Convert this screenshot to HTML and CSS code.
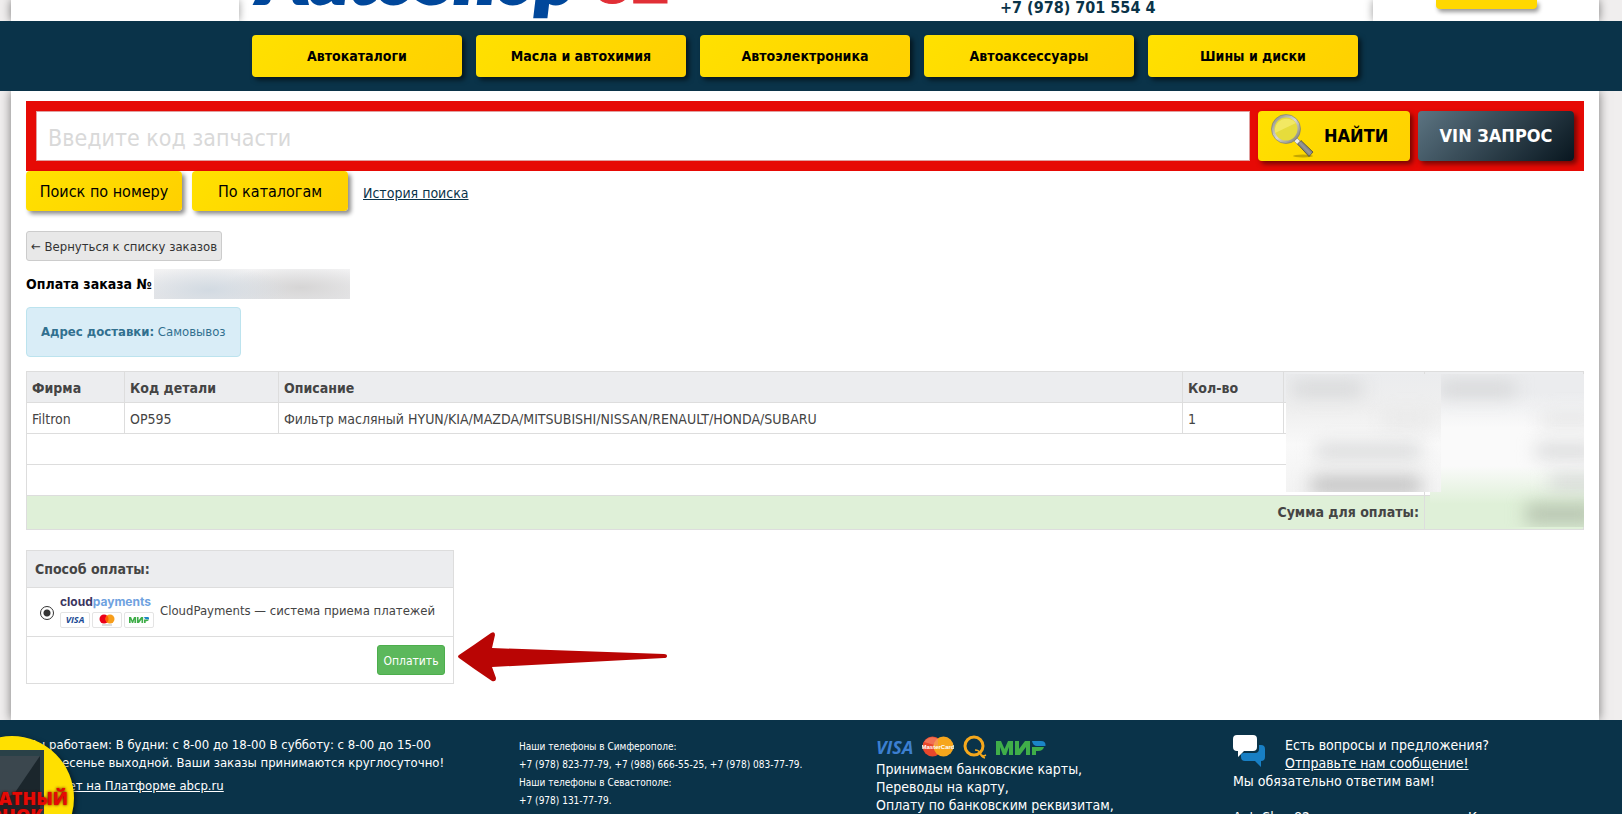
FILE: index.html
```html
<!DOCTYPE html>
<html lang="ru">
<head>
<meta charset="utf-8">
<title>Оплата заказа — AutoShop 82</title>
<link rel="stylesheet" href="styles.css">
</head>
<body>
<div class="page">
  <header class="header">
    <div class="header-side header-left"></div>
    <div class="header-main">
      <div class="logo"><span class="logo-name">AutoShop</span> <span class="logo-num">82</span></div>
      <div class="phone">+7 (978) 701 554 4</div>
    </div>
    <div class="header-side header-right"><div class="header-btn"></div></div>
  </header>
</div>
<nav class="nav">
  <a class="nav-btn" href="#">Автокаталоги</a>
  <a class="nav-btn" href="#">Масла и автохимия</a>
  <a class="nav-btn" href="#">Автоэлектроника</a>
  <a class="nav-btn" href="#">Автоаксессуары</a>
  <a class="nav-btn" href="#">Шины и диски</a>
</nav>
<div class="page page-main">
  <main class="content">
    <form class="search">
      <input class="search-input" type="text" placeholder="Введите код запчасти" aria-label="Код запчасти">
      <button class="search-btn" type="button">
        <svg class="lens" viewBox="0 0 44 44" width="44" height="44" aria-hidden="true">
          <defs>
            <linearGradient id="ring" x1="0" y1="0" x2="1" y2="1"><stop offset="0" stop-color="#8c8c84"/><stop offset=".5" stop-color="#d8d8d0"/><stop offset="1" stop-color="#77776f"/></linearGradient>
            <linearGradient id="grip" x1="0" y1="1" x2="1" y2="0"><stop offset="0" stop-color="#222"/><stop offset=".5" stop-color="#999"/><stop offset="1" stop-color="#333"/></linearGradient>
          </defs>
          <ellipse cx="33" cy="42" rx="10" ry="1.5" fill="#8a7400" opacity=".5"/>
          <path d="M24 27l3-3 5 5-3 3z" fill="#eee" stroke="#888" stroke-width=".6"/>
          <path d="M27.500 30l3.500-3.500 12 11.500-4 4.500z" fill="url(#grip)" stroke="#333" stroke-width=".6"/>
          <circle cx="16" cy="15" r="13" fill="#e6dc3c" stroke="url(#ring)" stroke-width="3"/>
          <path d="M5 19A12 12 0 0 1 26 9z" fill="#f6ec74" opacity=".7"/>
          <circle cx="16" cy="15" r="14.500" fill="none" stroke="#77776c" stroke-width=".6"/>
        </svg>
        <span>НАЙТИ</span>
      </button>
      <button class="vin-btn" type="button">VIN ЗАПРОС</button>
    </form>
    <div class="tabs">
      <button class="tab" type="button">Поиск по номеру</button>
      <button class="tab" type="button">По каталогам</button>
      <a class="history" href="#">История поиска</a>
    </div>
    <button class="back" type="button">← Вернуться к списку заказов</button>
    <h1 class="title">Оплата заказа № <span class="masked-number"></span></h1>
    <div class="alert"><strong>Адрес доставки:</strong> Самовывоз</div>
    <div class="order">
      <table class="order-table">
        <colgroup><col class="c-brand"><col class="c-code"><col><col class="c-qty"><col class="c-price"><col class="c-sum"></colgroup>
        <thead><tr><th>Фирма</th><th>Код детали</th><th>Описание</th><th>Кол-во</th><th></th><th></th></tr></thead>
        <tbody>
          <tr><td>Filtron</td><td>OP595</td><td>Фильтр масляный HYUN/KIA/MAZDA/MITSUBISHI/NISSAN/RENAULT/HONDA/SUBARU</td><td>1</td><td></td><td></td></tr>
          <tr><td colspan="5"></td><td></td></tr>
          <tr><td colspan="5"></td><td></td></tr>
          <tr class="total"><td colspan="5">Сумма для оплаты:</td><td></td></tr>
        </tbody>
      </table>
      <div class="mask mask-sum"><i class="smudge s-head"></i><i class="smudge s-one"></i><i class="smudge s-two"></i><i class="smudge s-three"></i><i class="smudge s-total"></i></div>
      <div class="mask mask-price"><i class="smudge p-head"></i><i class="smudge p-one"></i><i class="smudge p-two"></i><i class="smudge p-three"></i></div>
    </div>
    <div class="pay-row">
      <form class="pay">
        <div class="pay-head">Способ оплаты:</div>
        <div class="pay-option">
          <input class="radio" type="radio" id="cloud" name="pay" checked>
          <label class="pay-label" for="cloud">
            <span class="cloud">
              <span class="cloud-name">cloud<span>payments</span></span>
              <span class="cards">
                <span class="card visa">VISA</span>
                <span class="card"><svg viewBox="0 0 16 12" width="16" height="12" aria-hidden="true"><circle cx="5" cy="5" r="4.500" fill="#eb001b"/><circle cx="11" cy="5" r="4.500" fill="#f79e1b"/><path d="M8 1.600a4.500 4.500 0 0 1 0 6.800 4.500 4.500 0 0 1 0-6.800z" fill="#ff5f00"/><path d="M3 11h10" stroke="#bbb" stroke-width="1"/></svg></span>
                <span class="card"><svg viewBox="0 0 48 18" width="20" height="8" aria-hidden="true"><use href="#mir"/></svg></span>
              </span>
            </span>
            <span>CloudPayments — система приема платежей</span>
          </label>
        </div>
        <div class="pay-foot"><button class="pay-btn" type="button">Оплатить</button></div>
      </form>
      <svg class="arrow" viewBox="0 0 209 50" width="209" height="50" aria-hidden="true"><path d="M1 23Q16 13 33 1q4-2 4 2l-3 13 172 6q3 0 3 2t-3 2L34 35l4 11q0 4-4 3Q16 37 1 26q-2-1.500 0-3z" fill="#b90504"/></svg>
    </div>
  </main>
</div>
<footer class="footer">
  <div class="footer-cols">
    <div class="f-hours">
      <p>Мы работаем: В будни: с 8-00 до 18-00 В субботу: с 8-00 до 15-00<br>Воскресенье выходной. Ваши заказы принимаются круглосуточно!</p>
      <a href="#">Работает на Платформе abcp.ru</a>
    </div>
    <div class="f-phones">Наши телефоны в Симферополе:<br>+7 (978) 823-77-79, +7 (988) 666-55-25, +7 (978) 083-77-79.<br>Наши телефоны в Севастополе:<br>+7 (978) 131-77-79.</div>
    <div class="f-pay">
      <div class="f-logos">
        <span class="visa-logo">VISA</span>
        <svg viewBox="0 0 32 22" width="32" height="22" aria-hidden="true"><circle cx="10.500" cy="10.500" r="10" fill="#e8472c"/><circle cx="21.500" cy="10.500" r="10" fill="#f6a61c"/><path d="M2 6a10 10 0 0 1 14-3v7z" fill="#f78e70" opacity=".6"/><text class="mc-text" x="16" y="13" text-anchor="middle">MasterCard</text></svg>
        <svg viewBox="0 0 24 24" width="24" height="24" aria-hidden="true"><circle cx="11" cy="11" r="9" fill="none" stroke="#f5a81c" stroke-width="3"/><path d="M12 15q4 0 5 3t4 3l2-1M17 18q1 4 5 5" fill="none" stroke="#f5a81c" stroke-width="1.500"/></svg>
        <svg viewBox="0 0 50 16" width="50" height="16" aria-hidden="true">
          <defs><g id="mir"><path d="M0 16V2h5l3.500 8L12 2h5v14h-4V8L10 16H7L4 8v8zM19 2h4v8l6-8h5v14h-4V8l-6 8h-5zM36 8h12q-1 4-6 4h-2v4h-4z" fill="#3fae49"/><path d="M36 2h9q5 0 4.500 5H41q-4 0-5-5z" fill="#1b85c7"/></g></defs>
          <use href="#mir"/></svg>
      </div>
      Принимаем банковские карты,<br>Переводы на карту,<br>Оплату по банковским реквизитам,
    </div>
    <div class="f-ask">
      <div class="ask-head">
        <svg viewBox="0 0 32 32" width="32" height="32" aria-hidden="true"><path d="M28 10q4 0 4 4v8q0 4-4 4v6l-6-6H12q-4 0-4-4v-2q0-2 3-2h11q4 0 4-4v-4z" fill="#187fc4"/><path d="M4 0h16q4 0 4 4v8q0 4-4 4h-9l-6 6v-6H4q-4 0-4-4V4q0-4 4-4z" fill="#fff"/></svg>
        <div class="ask-text">Есть вопросы и предложения?<br><a href="#">Отправьте нам сообщение!</a></div>
      </div>
      <p>Мы обязательно ответим вам!</p>
      <p class="f-about">AutoShop82 — интернет-магазин в Крыму</p>
    </div>
  </div>
</footer>
<button class="callback" type="button">
  <svg viewBox="0 0 64 64" width="64" height="64" aria-hidden="true"><path d="M0 0h64v64H0z" fill="#1b262c"/><path d="M0 0h64L34 44 0 58z" fill="#3b474e"/><path d="M0 0h64v6H0zM60 0h4v64h-4z" fill="#2a4148"/></svg>
  <span>БЕСПЛАТНЫЙ<br>ЗВОНОК</span>
</button>
</body>
</html>
```
FILE: styles.css
```css
* { box-sizing: border-box; }
body {
  display: flex; flex-direction: column;
  height: 100vh;
  margin: 0;
  overflow: hidden;
  position: relative;
  background: #f0eeee;
  color: #444;
  font: 14px/18px "DejaVu Sans Condensed", "DejaVu Sans", sans-serif;
  font-stretch: condensed;
}
button, input { font: inherit; font-stretch: condensed; }
p { margin: 0; }
.nav-btn, .search-btn, .vin-btn, .phone, .total, .pay-head { font-weight: bold; }
.page {
  flex: none;
  margin: 0 23px 0 11px;
  background: #fff;
  box-shadow: 0 0 10px rgba(0, 0, 0, .5);
}
.header { display: flex; height: 21px; overflow: hidden; }
.header-side { background: #fff; box-shadow: 0 0 8px rgba(0, 0, 0, .4); }
.header-left { width: 228px; }
.header-right { width: 226px; padding-left: 63px; }
.header-main { flex: 1; display: flex; align-items: flex-end; padding-left: 20px; }
.header-btn {
  width: 101px; height: 9px;
  border-radius: 0 0 4px 4px;
  background: #ffd800;
  box-shadow: 2px 3px 4px rgba(0, 0, 0, .4);
}
.logo { width: 741px; padding-bottom: 5px; font: italic 900 76px/76px Lato, sans-serif; white-space: nowrap; }
.logo-name { color: #00479b; -webkit-text-stroke: 4px #00479b; }
.logo-num { color: #e12f36; font-size: 66px; font-style: normal; -webkit-text-stroke: 1px #e12f36; }
.phone { color: #0a3349; font-size: 16px; line-height: 26px; white-space: nowrap; }
.nav {
  position: relative;
  display: flex; justify-content: center; gap: 14px;
  padding: 14px 12px 14px 0;
  background: #0a3349;
}
.nav-btn {
  width: 210px;
  border-radius: 4px;
  background: linear-gradient(135deg, #ffe100, #ffd000);
  box-shadow: 3px 3px 5px rgba(0, 0, 0, .6);
  color: #000; line-height: 42px;
  text-align: center; text-decoration: none;
}
.content { padding: 10px 15px 36px; }
.search { display: flex; gap: 8px; padding: 10px; background: #e60a05; }
.search-input {
  flex: 1; min-width: 0; height: 50px;
  padding: 3px 11px 0;
  border: 1px solid #e0a0a0;
  background: #fff; color: #333; font-size: 23px;
}
.search-input::placeholder { color: #d9d9d9; opacity: 1; }
.search-btn, .vin-btn {
  height: 50px; padding: 0;
  border: 0; border-radius: 4px;
  font-size: 18px;
  box-shadow: 3px 3px 5px rgba(0, 0, 0, .5);
}
.search-btn {
  display: flex; align-items: center; gap: 10px;
  width: 152px; padding-left: 12px;
  background: linear-gradient(135deg, #ffe100, #ffd000);
  color: #000;
}
.vin-btn { width: 156px; background: linear-gradient(135deg, #5c7482, #08161f); color: #fff; }
.tabs { display: flex; align-items: center; gap: 10px; }
.tab {
  width: 156px; height: 40px; padding: 2px 0 0;
  border: 0; border-radius: 4px;
  background: linear-gradient(135deg, #ffe100, #ffd000);
  box-shadow: 3px 3px 4px rgba(0, 0, 0, .45);
  color: #000; font-size: 16px;
}
.history { margin: 4px 0 0 5px; color: #0a3349; }
.back {
  display: block; height: 30px; margin-top: 20px; padding: 1px 4px 0;
  border: 1px solid #ccc; border-radius: 3px;
  background: #e8e8e8; color: #333; font-size: 13px;
}
.title {
  display: flex; align-items: center; gap: 2px;
  height: 30px; margin: 8px 0;
  color: #000; font-size: 14px;
}
.masked-number {
  width: 196px; height: 30px;
  background:
    radial-gradient(80px 24px at 28% 70%, #d2dae2, transparent),
    radial-gradient(80px 22px at 75% 62%, #d6d5d5, transparent),
    linear-gradient(#f2f2f3, #e6e6e8);
}
.alert {
  width: max-content; padding: 15px 14px;
  border: 1px solid #bce3ee; border-radius: 4px;
  background: #d9edf7; color: #31708f; font-size: 13px;
}
.order { position: relative; margin-top: 14px; }
.order-table { width: 100%; border-collapse: collapse; table-layout: fixed; }
.c-brand { width: 98px; }
.c-code { width: 154px; }
.c-qty { width: 101px; }
.c-price { width: 141px; }
.c-sum { width: 159px; }
.order-table th, .order-table td {
  height: 31px; padding: 1px 5px 0;
  border: 1px solid #ddd; text-align: left;
}
.order-table th { background: #ecedef; }
.order-table .total td { height: 34px; padding: 0 5px 1px; background: #dff0d8; text-align: right; }
.mask { position: absolute; top: 3px; overflow: hidden; }
.mask-price {
  right: 143px; width: 155px; height: 118px;
  background: linear-gradient(#ebecee, #efefef 30%, #f9f9f9 60%, #f3f3f3);
}
.mask-sum {
  right: 0; width: 154px; height: 153px;
  background: linear-gradient(#ebecee 12%, #fafafa 35%, #fafafa 60%, #dff0d8 85%);
}
.smudge { position: absolute; height: 12px; background: #d0d1d2; filter: blur(9px); }
.p-head { left: 6px; top: 9px; width: 70px; }
.p-one { left: 96px; top: 40px; width: 50px; background: #e6e6e6; }
.p-two { left: 30px; top: 71px; width: 105px; }
.p-three { left: 25px; top: 103px; width: 110px; height: 16px; background: #bbb; }
.s-head { left: 10px; top: 9px; width: 75px; }
.s-one { left: 110px; top: 40px; width: 60px; background: #e2e2e2; }
.s-two { left: 106px; top: 71px; width: 60px; }
.s-three { left: 120px; top: 102px; width: 60px; }
.s-total { left: 96px; top: 130px; width: 70px; height: 20px; background: #b5c2ae; }
.pay-row { display: flex; align-items: center; gap: 4px; margin-top: 20px; }
.pay { width: 428px; border: 1px solid #ddd; }
.pay-head { padding: 9px 8px; background: #ecedef; }
.pay-option {
  display: flex; align-items: center; gap: 6px;
  height: 50px; padding: 0 8px 3px 13px;
  border: solid #ddd; border-width: 1px 0;
}
.radio {
  appearance: none; flex: none;
  width: 14px; height: 14px; margin: 5px 0 0;
  border: 1px solid #333; border-radius: 50%;
  background: radial-gradient(#333 0 3px, #fff 4px);
}
.pay-label { display: flex; align-items: center; gap: 5px; font-size: 13px; white-space: nowrap; }
.cloud { display: flex; flex: none; flex-direction: column; gap: 2px; width: 95px; }
.cloud-name { color: #3a3560; font: bold 12px/16px Inter, sans-serif; }
.cloud-name span { color: #6fa2e0; }
.cards { display: flex; gap: 2px; }
.card {
  display: flex; align-items: center; justify-content: center;
  width: 30px; height: 16px;
  border: 1px solid #e4e4e4; border-radius: 2px;
}
.visa { color: #1b4a94; font: italic bold 9px/12px "Open Sans", sans-serif; }
.pay-foot { display: flex; justify-content: flex-end; padding: 8px; }
.pay-btn {
  width: 68px; height: 30px; padding: 1px 0 0;
  border: 1px solid #4cae4c; border-radius: 3px;
  background: #5cb85c; color: #fff; font-size: 12px;
}
.arrow { flex: none; margin-top: 80px; }
.footer {
  position: relative; flex: 1; min-height: 0; overflow: hidden;
  padding: 14px 22px 0 26px;
  background: #0a3349; color: #fff;
}
.footer a { color: #fff; }
.footer-cols { display: grid; grid-template-columns: 493px 357px 357px 1fr; white-space: nowrap; }
.f-hours { padding-top: 2px; font-size: 13px; }
.f-hours a { display: inline-block; margin-top: 5px; }
.f-phones { padding-top: 4px; font-size: 10px; }
.f-logos { display: flex; align-items: center; gap: 9px; height: 26px; }
.visa-logo { color: #3c7fd0; font: italic bold 18px/18px "Open Sans", sans-serif; }
.mc-text { fill: #fff; font: bold 6px "Liberation Sans", sans-serif; }
.ask-head { display: flex; gap: 20px; padding-top: 1px; }
.ask-text { padding-top: 1px; }
.f-about { margin-top: 18px; }
.callback {
  position: absolute; left: -50px; bottom: -46px;
  width: 124px; height: 124px; padding: 0;
  border: 0; border-radius: 50%;
  background: #ffe000;
  box-shadow: 2px 2px 5px rgba(0, 0, 0, .5);
  color: #e60a05; font: 900 18px/17px "Open Sans", sans-serif;
  text-shadow: 0 0 3px #500;
}
.callback svg { position: absolute; left: 30px; top: 14px; }
.callback span { position: absolute; right: 6px; top: 54px; }
```
